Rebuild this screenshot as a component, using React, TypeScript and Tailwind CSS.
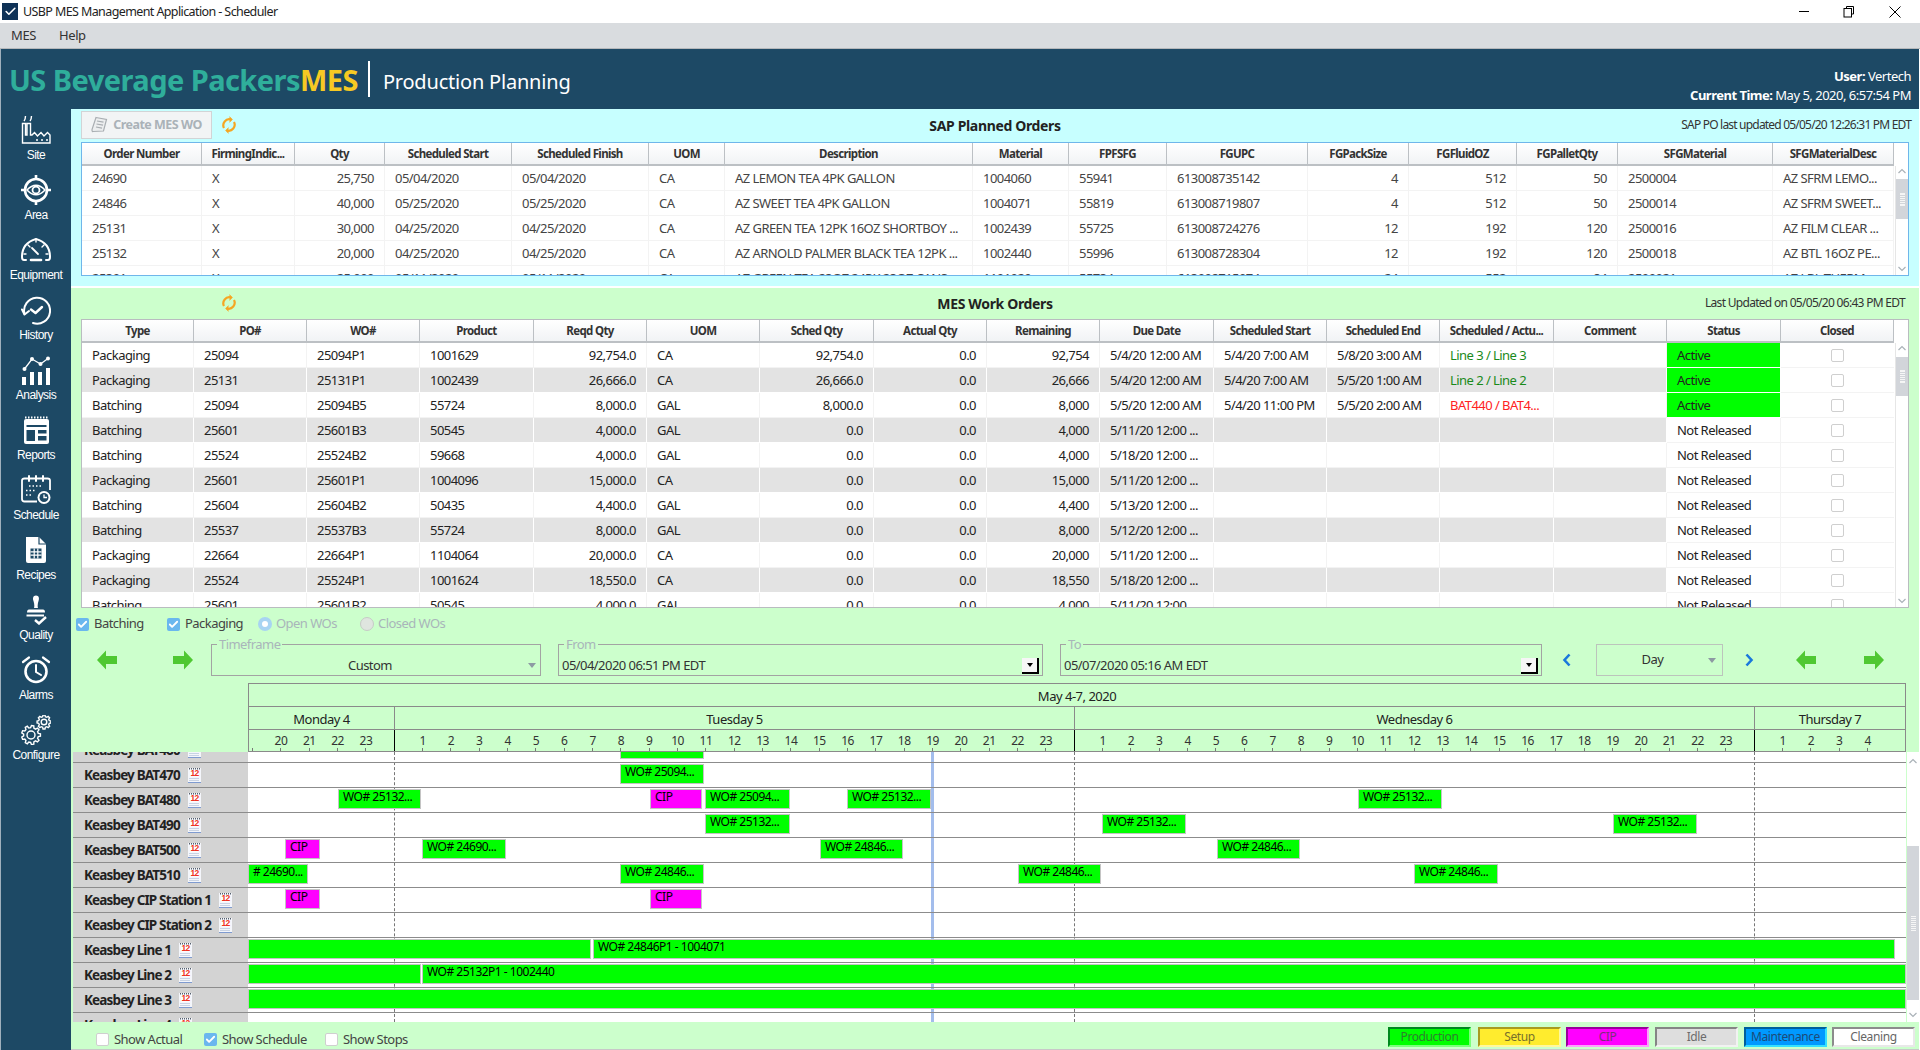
import { Check } from "lucide-react";

const sapCols = "grid-cols-[120px_93px_90px_127px_137px_76px_248px_96px_98px_141px_101px_108px_101px_155px_121px]";
const mesCols = "grid-cols-[112px_113px_113px_114px_113px_113px_114px_113px_113px_114px_113px_113px_114px_113px_114px_113px]";

const sapHead = ["Order Number", "FirmingIndic...", "Qty", "Scheduled Start", "Scheduled Finish", "UOM", "Description", "Material", "FPFSFG", "FGUPC", "FGPackSize", "FGFluidOZ", "FGPalletQty", "SFGMaterial", "SFGMaterialDesc"];
const sapRight = [2, 10, 11, 12];
const sapRows = [
  ["24690", "X", "25,750", "05/04/2020", "05/04/2020", "CA", "AZ LEMON TEA 4PK GALLON", "1004060", "55941", "613008735142", "4", "512", "50", "2500004", "AZ SFRM LEMO..."],
  ["24846", "X", "40,000", "05/25/2020", "05/25/2020", "CA", "AZ SWEET TEA 4PK GALLON", "1004071", "55819", "613008719807", "4", "512", "50", "2500014", "AZ SFRM SWEET..."],
  ["25131", "X", "30,000", "04/25/2020", "04/25/2020", "CA", "AZ GREEN TEA 12PK 16OZ SHORTBOY ...", "1002439", "55725", "613008724276", "12", "192", "120", "2500016", "AZ FILM CLEAR ..."],
  ["25132", "X", "20,000", "04/25/2020", "04/25/2020", "CA", "AZ ARNOLD PALMER BLACK TEA 12PK ...", "1002440", "55996", "613008728304", "12", "192", "120", "2500018", "AZ BTL 16OZ PE..."],
  ["25301", "X", "25,000", "05/11/2020", "05/11/2020", "CA", "AZ GREEN TEA 23OZ 24PK 23OZ CANS", "1101029", "55734", "613008715074", "24", "552", "84", "2500021", "AZ LBL THERM..."],
];

const mesHead = ["Type", "PO#", "WO#", "Product", "Reqd Qty", "UOM", "Sched Qty", "Actual Qty", "Remaining", "Due Date", "Scheduled Start", "Scheduled End", "Scheduled / Actu...", "Comment", "Status", "Closed"];
const mesRight = [4, 6, 7, 8];
const mesRows = [
  ["Packaging", "25094", "25094P1", "1001629", "92,754.0", "CA", "92,754.0", "0.0", "92,754", "5/4/20 12:00 AM", "5/4/20 7:00 AM", "5/8/20 3:00 AM", "Line 3 / Line 3", "", "Active"],
  ["Packaging", "25131", "25131P1", "1002439", "26,666.0", "CA", "26,666.0", "0.0", "26,666", "5/4/20 12:00 AM", "5/4/20 7:00 AM", "5/5/20 1:00 AM", "Line 2 / Line 2", "", "Active"],
  ["Batching", "25094", "25094B5", "55724", "8,000.0", "GAL", "8,000.0", "0.0", "8,000", "5/5/20 12:00 AM", "5/4/20 11:00 PM", "5/5/20 2:00 AM", "BAT440 / BAT4...", "", "Active"],
  ["Batching", "25601", "25601B3", "50545", "4,000.0", "GAL", "0.0", "0.0", "4,000", "5/11/20 12:00 ...", "", "", "", "", "Not Released"],
  ["Batching", "25524", "25524B2", "59668", "4,000.0", "GAL", "0.0", "0.0", "4,000", "5/18/20 12:00 ...", "", "", "", "", "Not Released"],
  ["Packaging", "25601", "25601P1", "1004096", "15,000.0", "CA", "0.0", "0.0", "15,000", "5/11/20 12:00 ...", "", "", "", "", "Not Released"],
  ["Batching", "25604", "25604B2", "50435", "4,400.0", "GAL", "0.0", "0.0", "4,400", "5/13/20 12:00 ...", "", "", "", "", "Not Released"],
  ["Batching", "25537", "25537B3", "55724", "8,000.0", "GAL", "0.0", "0.0", "8,000", "5/12/20 12:00 ...", "", "", "", "", "Not Released"],
  ["Packaging", "22664", "22664P1", "1104064", "20,000.0", "CA", "0.0", "0.0", "20,000", "5/11/20 12:00 ...", "", "", "", "", "Not Released"],
  ["Packaging", "25524", "25524P1", "1001624", "18,550.0", "CA", "0.0", "0.0", "18,550", "5/18/20 12:00 ...", "", "", "", "", "Not Released"],
  ["Batching", "25601", "25601B2", "50545", "4,000.0", "GAL", "0.0", "0.0", "4,000", "5/11/20 12:00 ...", "", "", "", "", "Not Released"],
];

type Bar = { x1: number; x2: number; label?: string; cip?: boolean };
const ganttRows: { name: string; bars: Bar[] }[] = [
  { name: "Keasbey BAT460", bars: [{ x1: 620, x2: 704 }] },
  { name: "Keasbey BAT470", bars: [{ x1: 620, x2: 704, label: "WO# 25094..." }] },
  { name: "Keasbey BAT480", bars: [{ x1: 338, x2: 421, label: "WO# 25132..." }, { x1: 650, x2: 702, label: "CIP", cip: true }, { x1: 705, x2: 790, label: "WO# 25094..." }, { x1: 847, x2: 931, label: "WO# 25132..." }, { x1: 1358, x2: 1442, label: "WO# 25132..." }] },
  { name: "Keasbey BAT490", bars: [{ x1: 705, x2: 790, label: "WO# 25132..." }, { x1: 1102, x2: 1186, label: "WO# 25132..." }, { x1: 1613, x2: 1697, label: "WO# 25132..." }] },
  { name: "Keasbey BAT500", bars: [{ x1: 285, x2: 320, label: "CIP", cip: true }, { x1: 422, x2: 506, label: "WO# 24690..." }, { x1: 820, x2: 903, label: "WO# 24846..." }, { x1: 1217, x2: 1300, label: "WO# 24846..." }] },
  { name: "Keasbey BAT510", bars: [{ x1: 248, x2: 308, label: "# 24690..." }, { x1: 620, x2: 704, label: "WO# 24846..." }, { x1: 1018, x2: 1101, label: "WO# 24846..." }, { x1: 1414, x2: 1498, label: "WO# 24846..." }] },
  { name: "Keasbey CIP Station 1", bars: [{ x1: 285, x2: 320, label: "CIP", cip: true }, { x1: 650, x2: 702, label: "CIP", cip: true }] },
  { name: "Keasbey CIP Station 2", bars: [] },
  { name: "Keasbey Line 1", bars: [{ x1: 248, x2: 591 }, { x1: 593, x2: 1895, label: "WO# 24846P1 - 1004071" }] },
  { name: "Keasbey Line 2", bars: [{ x1: 248, x2: 421 }, { x1: 422, x2: 1906, label: "WO# 25132P1 - 1002440" }] },
  { name: "Keasbey Line 3", bars: [{ x1: 248, x2: 1906 }] },
  { name: "Keasbey Line 4", bars: [] },
];

const hours: { x: number; label: string }[] = [{ x: 252, label: "" }];
[20, 21, 22, 23].forEach((h) => hours.push({ x: 394.3 + (h - 24) * 28.33, label: String(h) }));
[0, 1].forEach((d) => {
  for (let h = 1; h < 24; h++) hours.push({ x: 394.3 + 680 * d + h * 28.33, label: String(h) });
});
[1, 2, 3, 4].forEach((h) => hours.push({ x: 1754.3 + h * 28.33, label: String(h) }));

const legend = [
  { label: "Production", cls: "bg-[#00ff00] border-t-[#00891e] border-l-[#00891e] border-r-[#7cff7c] border-b-[#7cff7c] text-[#2f7f2f]", ml: "" },
  { label: "Setup", cls: "bg-[#ffec2e] border-t-[#a89a20] border-l-[#a89a20] border-r-[#fff8a0] border-b-[#fff8a0] text-[#77702c]", ml: "ml-[7px]" },
  { label: "CIP", cls: "bg-[#ff00ff] border-t-[#990099] border-l-[#990099] border-r-[#ff9cff] border-b-[#ff9cff] text-[#7a2f7a]", ml: "ml-[5px]" },
  { label: "Idle", cls: "bg-[#dedede] border-t-[#858585] border-l-[#858585] border-r-[#f2f2f2] border-b-[#f2f2f2] text-[#6c6c6c]", ml: "ml-[6px]" },
  { label: "Maintenance", cls: "bg-[#0099ff] border-t-[#005f9c] border-l-[#005f9c] border-r-[#33e0ff] border-b-[#33e0ff] text-[#1d4a78]", ml: "ml-[6px]" },
  { label: "Cleaning", cls: "bg-white border-t-[#8c8c8c] border-l-[#8c8c8c] border-r-[#e8e8e8] border-b-[#e8e8e8] text-[#666666]", ml: "ml-[5px]" },
];

function gearPath(cx: number, cy: number, r: number, teeth: number) {
  const pts: string[] = [];
  const step = (Math.PI * 2) / teeth;
  for (let i = 0; i < teeth; i++) {
    const a = i * step;
    [
      [r * 0.78, a - step * 0.32],
      [r, a - step * 0.18],
      [r, a + step * 0.18],
      [r * 0.78, a + step * 0.32],
    ].forEach(([rad, t]) => pts.push(`${(cx + rad * Math.cos(t)).toFixed(2)} ${(cy + rad * Math.sin(t)).toFixed(2)}`));
  }
  return "M" + pts.join("L") + "Z";
}

const navIcons: Record<string, React.ReactNode> = {
  Site: (
    <g fill="none" stroke="white" strokeWidth="1.4">
      <path d="M1.5 28V8.5H4.5V20H6V8.5H9.5V20H11L13.5 17.5L16.5 21L20 17.5L23 21L26.5 17.5L29 20V28Z" />
      <path d="M3 6Q4.5 4 4.5 1M9 6Q10.5 4 10.5 1" />
      <path d="M15 25H17M20 25H22M25 25H27" strokeWidth="1.6" />
    </g>
  ),
  Area: (
    <g fill="none" stroke="white">
      <circle cx="15" cy="15" r="11" strokeWidth="2.6" />
      <path d="M15 0V5M15 25V30M0 15H5M25 15H30" strokeWidth="2.6" />
      <path d="M6 15Q15 5.500 24 15Q15 24.500 6 15Z" strokeWidth="1.6" />
      <circle cx="15" cy="15" r="3.500" strokeWidth="1.800" />
    </g>
  ),
  Equipment: (
    <g fill="none" stroke="white" strokeWidth="2" strokeLinecap="round">
      <path d="M5 25H3Q1 25 1 22Q1 8 15 4Q29 8 29 22Q29 25 27 25H25" />
      <path d="M15 4V7M7 10L9 12M23 10L21 12M3 19H5M27 19H25" strokeWidth="1.400" />
      <path d="M11 13L17 19" strokeWidth="1.800" />
      <path d="M10 25H20" strokeWidth="2.600" />
    </g>
  ),
  History: (
    <g fill="none" stroke="white" strokeWidth="2" strokeLinecap="round" strokeLinejoin="round">
      <path d="M3.500 19A13 13 0 1 1 12 28" />
      <path d="M1 14.500L3.500 19.500L8 16" />
      <path d="M10 14.500L14.500 18L21 12" strokeWidth="2.400" />
    </g>
  ),
  Analysis: (
    <g fill="white">
      <path d="M3.500 14L11 4L19.500 9L27 3.500" fill="none" stroke="white" strokeWidth="1.300" />
      <circle cx="3.500" cy="14" r="2" />
      <circle cx="11" cy="4" r="2" />
      <circle cx="19.500" cy="9" r="2" />
      <circle cx="27" cy="3.500" r="2" />
      <rect x="1" y="22" width="4" height="8" />
      <rect x="9" y="17" width="4" height="13" />
      <rect x="17" y="17" width="4" height="13" />
      <rect x="25" y="13" width="4" height="17" />
    </g>
  ),
  Reports: (
    <g>
      <rect x="3" y="4" width="25" height="25" rx="2" fill="white" />
      <path d="M4 2.500H27" stroke="white" strokeWidth="2" strokeDasharray="1.500 1.500" />
      <path d="M5.500 10H25.500V12H5.500ZM5.500 15H14V26H5.500ZM17 15H25.500V18.500H17ZM17 21H25.500V25.500H17Z" fill="#1d4965" />
    </g>
  ),
  Schedule: (
    <g>
      <path d="M16 26.500H3.500Q1 26.500 1 24V5.500Q1 3.500 3.500 3.500H26.500Q29 3.500 29 5.500V15" fill="none" stroke="white" strokeWidth="1.800" />
      <path d="M8 1V6M15 1V6M22 1V6" stroke="white" strokeWidth="2" strokeLinecap="round" />
      <path d="M8 11H21M5 15.500H15M5 20H11" stroke="white" strokeWidth="1.500" strokeDasharray="1.500 2" />
      <circle cx="23" cy="22.500" r="6.500" fill="white" />
      <circle cx="23" cy="22.500" r="4.500" fill="#1d4965" />
      <path d="M23 19.500V22.500H26" fill="none" stroke="white" strokeWidth="1.300" />
    </g>
  ),
  Recipes: (
    <g>
      <path d="M5 2H18L25 9V26Q25 28 23 28H7Q5 28 5 26Z" fill="white" />
      <path d="M18 2V9H25" fill="none" stroke="#1d4965" strokeWidth="1.200" />
      <path d="M9.500 13.500H20.500V23.500H9.500Z" fill="#1d4965" />
      <path d="M13.200 13.500V23.500M16.800 13.500V23.500M9.500 16.800H20.500M9.500 20.200H20.500" stroke="white" strokeWidth="1.200" />
    </g>
  ),
  Quality: (
    <g>
      <path d="M15 0.500C12 0.500 11.500 3.500 12.500 6C13.500 9 13.500 12 13 13H17C16.500 12 16.500 9 17.500 6C18.500 3.500 18 0.500 15 0.500Z" fill="white" />
      <path d="M8 14.500H22Q24 14.500 24 17.500H6Q6 14.500 8 14.500Z" fill="white" />
      <path d="M5.500 20.500H23" stroke="white" strokeWidth="2" />
      <path d="M14 25L18 28.500L25 22" fill="none" stroke="white" strokeWidth="2.400" />
    </g>
  ),
  Alarms: (
    <g fill="none" stroke="white" strokeLinecap="round">
      <circle cx="15" cy="16.500" r="10.500" strokeWidth="2.600" />
      <path d="M15 10V17L20 20" strokeWidth="2" />
      <path d="M2 7L8 2.500M28 7L22 2.500" strokeWidth="2.200" />
    </g>
  ),
  Configure: (
    <g fill="none" stroke="white" strokeWidth="1.400">
      <path d={gearPath(10, 20, 9.500, 9)} />
      <circle cx="10" cy="20" r="4" />
      <path d={gearPath(23, 7, 7, 8)} />
      <circle cx="23" cy="7" r="2.800" />
    </g>
  ),
};

const navItems = ["Site", "Area", "Equipment", "History", "Analysis", "Reports", "Schedule", "Recipes", "Quality", "Alarms", "Configure"];

function RefreshIcon() {
  return (
    <svg width="14" height="18" viewBox="0 0 14 18" fill="none" stroke="#f5a623" strokeWidth="2.200">
      <path d="M2 12A6 6 0 0 1 9 3.500" />
      <path d="M12 6A6 6 0 0 1 5 14.500" />
      <path d="M7.500 0.500L10.500 3.500L7.500 6.500" fill="#f5a623" strokeWidth="0.500" />
      <path d="M6.500 11.500L3.500 14.500L6.500 17.500" fill="#f5a623" strokeWidth="0.500" />
    </svg>
  );
}

function BlueCheck() {
  return (
    <span className="flex h-[13px] w-[13px] shrink-0 items-center justify-center rounded-[2px] bg-[#6ab7ee]">
      <Check size={11} color="white" strokeWidth={4} />
    </span>
  );
}

function EmptyBox() {
  return <span className="h-[13px] w-[13px] shrink-0 rounded-[2px] border border-[#cfcfcf] bg-white" />;
}

function GreenArrow({ right }: { right?: boolean }) {
  return (
    <svg width="20" height="20" viewBox="0 0 20 20" className={right ? "shrink-0" : "shrink-0 -scale-x-100"}>
      <path d="M0 6H11V0.500L20 10L11 19.500V14H0Z" fill="#4fc832" />
    </svg>
  );
}

function BlueChevron({ right }: { right?: boolean }) {
  return (
    <svg width="10" height="14" viewBox="0 0 10 14" className="shrink-0">
      <path d={right ? "M2.500 1.500L7.500 7L2.500 12.500" : "M7.500 1.500L2.500 7L7.500 12.500"} fill="none" stroke="#1a78dc" strokeWidth="2.600" />
    </svg>
  );
}

function Caret() {
  return <span className="h-0 w-0 border-x-[4px] border-t-[5px] border-x-transparent border-t-[#8d9aa3]" />;
}

function DateButton() {
  return (
    <span className="ml-auto mr-[3px] flex h-[16px] w-[17px] items-center justify-center border-b-2 border-r-2 border-black bg-[#f6f6f6]">
      <span className="h-0 w-0 border-x-[3px] border-t-[4px] border-x-transparent border-t-black" />
    </span>
  );
}

function ScrollStrip({ thumbTop, thumbHeight }: { thumbTop: string; thumbHeight: string }) {
  return (
    <div className="relative h-full w-[13px] shrink-0 border-l border-[#e6e6e6] bg-white">
      <svg width="10" height="6" viewBox="0 0 10 6" className="absolute left-[1px] top-[2px]">
        <path d="M1.500 5L5 1.500L8.500 5" fill="none" stroke="#aab2b8" strokeWidth="1.200" />
      </svg>
      <div className={`absolute left-0 right-0 flex items-center justify-center bg-[#d2d5da] ${thumbTop} ${thumbHeight}`}>
        <span className="h-[13px] w-[5px] border-y border-[#f4f4f4] bg-[repeating-linear-gradient(to_bottom,#f6f6f6_0,#f6f6f6_1px,#d2d5da_1px,#d2d5da_2px)]" />
      </div>
      <svg width="10" height="6" viewBox="0 0 10 6" className="absolute bottom-[3px] left-[1px]">
        <path d="M1.500 1L5 4.500L8.500 1" fill="none" stroke="#aab2b8" strokeWidth="1.200" />
      </svg>
    </div>
  );
}

function HeaderRow({ cols, labels }: { cols: string; labels: string[] }) {
  return (
    <div className={`grid h-[23px] shrink-0 ${cols} border-b-2 border-[#bcc0c4] bg-gradient-to-b from-white to-[#f1f3f5]`}>
      {labels.map((h, i) => (
        <div key={i} className="flex items-center justify-center border-r border-[#bcc0c4] text-[11.5px] font-bold tracking-[-0.65px] text-[#333333]">
          {h}
        </div>
      ))}
    </div>
  );
}

function SapTable() {
  return (
    <div className="ml-[10px] flex h-[134px] w-[1828px] border border-[#6fb6ea] bg-white">
      <div className="w-[1812px] shrink-0 overflow-hidden">
        <HeaderRow cols={sapCols} labels={sapHead} />
        {sapRows.map((r, i) => (
          <div key={i} className={`grid h-[25px] ${sapCols} border-b border-[#f3f3f3]`}>
            {r.map((c, j) => (
              <div key={j} className={`flex items-center truncate border-r border-[#f3f3f3] px-[10px] pt-[1px] text-[13px] tracking-[-0.55px] text-[#444444] ${sapRight.includes(j) ? "justify-end" : ""}`}>
                {c}
              </div>
            ))}
          </div>
        ))}
      </div>
      <div className="flex h-full w-[14px] flex-col">
        <div className="h-[23px] shrink-0" />
        <div className="min-h-0 flex-1 pl-[1px]">
          <ScrollStrip thumbTop="top-[13px]" thumbHeight="h-[40px]" />
        </div>
      </div>
    </div>
  );
}

function MesTable() {
  return (
    <div className="ml-[10px] flex h-[289px] w-[1828px] border border-[#b9bcc0] bg-white">
      <div className="w-[1812px] shrink-0 overflow-hidden">
        <HeaderRow cols={mesCols} labels={mesHead} />
        {mesRows.map((r, i) => {
          const gray = i % 2 === 1;
          return (
            <div key={i} className={`grid h-[25px] ${mesCols}`}>
              {r.map((c, j) => {
                let cls = gray ? "bg-[#e3e3e3] border-white" : "bg-white border-[#f3f3f3]";
                let color = "text-[#222222]";
                if (j === 14) cls = c === "Active" ? "bg-[#00ff00] border-white" : "bg-white border-[#f3f3f3]";
                if (j === 12) color = c.startsWith("BAT") ? "text-[#ff2222]" : "text-[#1a8a1a]";
                return (
                  <div key={j} className={`flex items-center truncate border-b border-r px-[10px] pt-[1px] text-[13px] tracking-[-0.55px] ${cls} ${color} ${mesRight.includes(j) ? "justify-end" : ""}`}>
                    {c}
                  </div>
                );
              })}
              <div className="flex items-center justify-center border-b border-[#f3f3f3] bg-white">
                <EmptyBox />
              </div>
            </div>
          );
        })}
      </div>
      <div className="flex h-full w-[14px] flex-col">
        <div className="h-[23px] shrink-0" />
        <div className="min-h-0 flex-1 pl-[1px]">
          <ScrollStrip thumbTop="top-[14px]" thumbHeight="h-[39px]" />
        </div>
      </div>
    </div>
  );
}

function CalendarIcon() {
  return (
    <svg width="13" height="15" viewBox="0 0 13 15" className="shrink-0">
      <rect x="0" y="0" width="13" height="15" fill="#f4f6fb" />
      <path d="M1 0.700H12" stroke="#55606e" strokeWidth="1.400" strokeDasharray="1 1" />
      <rect x="2" y="2" width="9" height="6.500" fill="white" />
      <text x="6.500" y="8" textAnchor="middle" fontSize="8.500" fontWeight="700" fill="#ee3322" fontFamily="'Liberation Sans', sans-serif">12</text>
      <path d="M1.500 10.500H11.500M1.500 12.500H11.500" stroke="#9db0cc" strokeWidth="1" strokeDasharray="1 1" />
      <path d="M0 14.500H13" stroke="#7f9bd0" />
    </svg>
  );
}

function Gantt() {
  return (
    <div className="mt-[7px] flex h-[339px] flex-col">
      <div className="ml-[177px] h-[69px] w-[1658px] shrink-0 border-l border-r border-t border-[#8a8a8a]">
        <div className="flex h-[23px] items-center justify-center border-b border-[#8a8a8a] pt-[3px] text-[13px] tracking-[-0.5px] text-[#222222]">May 4-7, 2020</div>
        <div className="flex h-[23px] border-b border-[#8a8a8a] text-[13px] tracking-[-0.5px] text-[#222222]">
          <div className="flex w-[146px] items-center justify-center border-r border-[#8a8a8a] pt-[3px]">Monday 4</div>
          <div className="flex w-[680px] items-center justify-center border-r border-[#8a8a8a] pt-[3px]">Tuesday 5</div>
          <div className="flex w-[680px] items-center justify-center border-r border-[#8a8a8a] pt-[3px]">Wednesday 6</div>
          <div className="flex flex-1 items-center justify-center pt-[3px]">Thursday 7</div>
        </div>
        <div className="relative h-[22px] border-b border-[#8a8a8a]">
          {hours.map((h, i) => (
            <div key={i} className="absolute bottom-0 flex w-[20px] -translate-x-1/2 flex-col items-center" style={{ left: h.x - 249 }}>
              <span className="text-[12px] leading-[14px] tracking-[-0.5px] text-[#333333]">{h.label}</span>
              <span className="h-[3px] w-px bg-[#777777]" />
            </div>
          ))}
          {[394, 1074, 1754].map((x) => (
            <span key={x} className="absolute bottom-0 top-0 w-px bg-black" style={{ left: x - 249 }} />
          ))}
        </div>
      </div>
      <div className="flex h-[270px] pl-[2px]">
        <div className="w-[175px] shrink-0 overflow-hidden bg-[#d3d3d3]">
          <div className="-mt-[14px]">
            {ganttRows.map((r) => (
              <div key={r.name} className="flex h-[25px] items-center gap-[8px] border-b border-[#8c8c8c] pl-[11px] text-[13.5px] font-bold leading-[16px] tracking-[-0.85px] text-[#222222]">
                {r.name}
                <CalendarIcon />
              </div>
            ))}
          </div>
        </div>
        <div className="relative w-[1658px] shrink-0 overflow-hidden bg-white">
          <span className="absolute bottom-0 top-0 left-[683px] w-[3px] bg-[#a3bdec]" />
          {[146, 826, 1506].map((x) => (
            <span key={x} className="absolute bottom-0 top-0 border-l border-dashed border-[#777777]" style={{ left: x }} />
          ))}
          <div className="relative -mt-[14px]">
            {ganttRows.map((r) => (
              <div key={r.name} className="relative h-[25px] border-b border-[#8c8c8c]">
                {r.bars.map((b) => (
                  <div
                    key={b.x1}
                    className={`absolute top-[1px] h-[20px] truncate border border-[#c4c4c4] pl-[4px] text-[12px] leading-[13px] tracking-[-0.5px] text-black ${b.cip ? "bg-[#ff00ff]" : "bg-[#00ff00]"}`}
                    style={{ left: b.x1 - 248, width: b.x2 - b.x1 }}
                  >
                    {b.label}
                  </div>
                ))}
              </div>
            ))}
          </div>
        </div>
        <div className="ml-[1px] h-full">
          <div className="relative h-full w-[12px] bg-white">
            <svg width="10" height="6" viewBox="0 0 10 6" className="absolute left-[1px] top-[6px]">
              <path d="M1.500 5L5 1.500L8.500 5" fill="none" stroke="#aab2b8" strokeWidth="1.200" />
            </svg>
            <div className="absolute left-0 right-0 top-[94px] flex h-[154px] items-center justify-center bg-[#d2d5da]">
              <span className="h-[15px] w-[5px] bg-[repeating-linear-gradient(to_bottom,#f6f6f6_0,#f6f6f6_1px,#d2d5da_1px,#d2d5da_2px)]" />
            </div>
            <svg width="10" height="6" viewBox="0 0 10 6" className="absolute bottom-[4px] left-[1px]">
              <path d="M1.500 1L5 4.500L8.500 1" fill="none" stroke="#aab2b8" strokeWidth="1.200" />
            </svg>
          </div>
        </div>
      </div>
    </div>
  );
}

export default function App() {
  return (
    <div className="flex h-[1050px] w-[1920px] flex-col overflow-hidden bg-white font-['Noto_Sans',sans-serif]">
      <div className="flex h-[23px] shrink-0 items-center bg-white pl-[2px] text-[12.5px] tracking-[-0.6px] text-[#222222]">
        <span className="mr-[5px] flex h-[17px] w-[16px] items-center justify-center bg-[#0f3257]">
          <Check size={13} color="white" strokeWidth={3} />
        </span>
        <span className="pt-[1px]">USBP MES Management Application - Scheduler</span>
        <div className="ml-auto flex items-center">
          <span className="mr-[34px] h-px w-[10px] bg-black" />
          <svg width="12" height="12" viewBox="0 0 12 12" className="mr-[34px]" fill="none" stroke="black">
            <path d="M3.500 2.500V0.500H10.500V8H8.500" />
            <rect x="1" y="2.500" width="7.500" height="8.500" />
          </svg>
          <svg width="12" height="12" viewBox="0 0 12 12" className="mr-[19px]" stroke="black">
            <path d="M0.500 0.500L11.500 11.500M11.500 0.500L0.500 11.500" />
          </svg>
        </div>
      </div>
      <div className="flex h-[26px] shrink-0 items-center gap-[23px] border-b border-[#b5b8bb] bg-[#d9dcdf] pl-[11px] text-[13px] tracking-[-0.4px] text-[#333333]">
        <span>MES</span>
        <span>Help</span>
      </div>
      <div className="flex min-h-0 w-[1919px] flex-1 flex-col border-l border-[#9fb0bd]">
        <div className="flex h-[60px] shrink-0 items-center bg-[#1d4965] pl-[8px]">
          <span className="pt-[2px] text-[29px] font-bold tracking-[-0.55px] text-[#2fae9b]">US Beverage Packers</span>
          <span className="pt-[2px] text-[29px] font-bold tracking-[-0.55px] text-[#f7c923]">MES</span>
          <span className="ml-[10px] h-[36px] w-[2px] bg-white" />
          <span className="ml-[13px] mt-[6px] text-[20px] tracking-[-0.2px] text-white">Production Planning</span>
          <div className="ml-auto mt-[14px] flex flex-col items-end pr-[8px] text-[13px] leading-[19px] tracking-[-0.5px] text-white">
            <span><b>User:</b> Vertech</span>
            <span><b>Current Time:</b> May 5, 2020, 6:57:54 PM</span>
          </div>
        </div>
        <div className="flex min-h-0 flex-1">
          <nav className="flex w-[70px] shrink-0 flex-col bg-[#1d4965]">
            {navItems.map((n) => (
              <div key={n} className="flex h-[60px] flex-col items-center pt-[6px]">
                <svg width="30" height="30" viewBox="0 0 30 30">{navIcons[n]}</svg>
                <span className="mt-[2px] font-['Liberation_Sans',sans-serif] text-[12px] leading-[16px] tracking-[-0.55px] text-white">{n}</span>
              </div>
            ))}
          </nav>
          <main className="flex min-w-0 flex-1 flex-col bg-white">
            <section className="h-[177px] shrink-0 bg-[#c7ffff]">
              <div className="grid h-[33px] grid-cols-[1fr_auto_1fr] items-center pb-[1px]">
                <div className="flex items-center">
                  <button className="ml-[10px] flex h-[28px] w-[131px] items-center justify-center gap-[5px] border border-[#d2d4d6] bg-[#f2f4f5] text-[12.5px] font-bold tracking-[-0.5px] text-[#aab2b8]">
                    <svg width="17" height="18" viewBox="0 0 17 18" fill="none" stroke="#a9aeb2" strokeWidth="1.200">
                      <path d="M5 1.500L15.500 3.500L12.500 15L2 15.500Q1 16 1 13.500Z" fill="#eceeef" />
                      <path d="M6 5L12.500 6.200M5.500 8L12 9.200M5 11L11 12.200" />
                    </svg>
                    Create MES WO
                  </button>
                  <span className="ml-[10px] flex"><RefreshIcon /></span>
                </div>
                <span className="text-[14px] font-bold tracking-[-0.35px] text-[#222222]">SAP Planned Orders</span>
                <span className="pr-[8px] text-right text-[12px] tracking-[-0.8px] text-[#333333]">SAP PO last updated 05/05/20 12:26:31 PM EDT</span>
              </div>
              <SapTable />
            </section>
            <div className="h-[2px] shrink-0 bg-white" />
            <section className="flex min-h-0 flex-1 flex-col border-b border-[#c8c8c8] bg-[#ccffcc]">
              <div className="grid h-[31px] shrink-0 grid-cols-[1fr_auto_1fr] items-center pb-[1px]">
                <span className="ml-[151px] flex"><RefreshIcon /></span>
                <span className="text-[14px] font-bold tracking-[-0.35px] text-[#222222]">MES Work Orders</span>
                <span className="pr-[14px] text-right text-[12px] tracking-[-0.7px] text-[#333333]">Last Updated on 05/05/20 06:43 PM EDT</span>
              </div>
              <MesTable />
              <div className="flex h-[28px] shrink-0 items-center pl-[5px] pt-[4px] text-[13px] tracking-[-0.55px] text-[#444444]">
                <BlueCheck />
                <span className="ml-[5px] w-[73px]">Batching</span>
                <BlueCheck />
                <span className="ml-[5px] w-[73px]">Packaging</span>
                <span className="flex h-[14px] w-[14px] items-center justify-center rounded-full bg-[#a8d4f2]"><span className="h-[6px] w-[6px] rounded-full bg-white" /></span>
                <span className="ml-[4px] w-[84px] text-[#a9b5ba]">Open WOs</span>
                <span className="h-[14px] w-[14px] rounded-full border border-[#c6ccc6] bg-[#dfe5df]" />
                <span className="ml-[4px] text-[#a9b5ba]">Closed WOs</span>
              </div>
              <div className="flex h-[40px] shrink-0 text-[13px] tracking-[-0.55px] text-[#333333]">
                <span className="ml-[26px] mt-[14px] flex"><GreenArrow /></span>
                <span className="ml-[56px] mt-[14px] flex"><GreenArrow right /></span>
                <fieldset className="ml-[18px] h-full w-[330px] border border-[#a3a3a3]">
                  <legend className="ml-[5px] px-[2px] text-[13px] leading-[16px] text-[#a9b5ba]">Timeframe</legend>
                  <div className="flex h-[24px] items-center pr-[4px] pt-[3px]">
                    <span className="flex-1 text-center">Custom</span>
                    <Caret />
                  </div>
                </fieldset>
                <fieldset className="ml-[17px] h-full w-[485px] border border-[#a3a3a3]">
                  <legend className="ml-[5px] px-[2px] text-[13px] leading-[16px] text-[#a9b5ba]">From</legend>
                  <div className="flex h-[24px] items-center pl-[3px] pt-[3px]">
                    <span>05/04/2020 06:51 PM EDT</span>
                    <DateButton />
                  </div>
                </fieldset>
                <fieldset className="ml-[17px] h-full w-[482px] border border-[#a3a3a3]">
                  <legend className="ml-[5px] px-[2px] text-[13px] leading-[16px] text-[#a9b5ba]">To</legend>
                  <div className="flex h-[24px] items-center pl-[3px] pt-[3px]">
                    <span>05/07/2020 05:16 AM EDT</span>
                    <DateButton />
                  </div>
                </fieldset>
                <span className="ml-[20px] mt-[17px] flex"><BlueChevron /></span>
                <div className="ml-[24px] mt-[8px] flex h-[32px] w-[127px] items-center border border-[#bcc4bc] pr-[6px]">
                  <span className="flex-1 text-center">Day</span>
                  <Caret />
                </div>
                <span className="ml-[21px] mt-[17px] flex"><BlueChevron right /></span>
                <span className="ml-[42px] mt-[14px] flex"><GreenArrow /></span>
                <span className="ml-[48px] mt-[14px] flex"><GreenArrow right /></span>
              </div>
              <Gantt />
              <div className="flex min-h-0 flex-1 items-start text-[13px] tracking-[-0.55px] text-[#444444]">
                <span className="ml-[25px] mt-[8px] flex w-[108px] items-center gap-[5px]"><EmptyBox />Show Actual</span>
                <span className="mt-[8px] flex w-[121px] items-center gap-[5px]"><BlueCheck />Show Schedule</span>
                <span className="mt-[8px] flex items-center gap-[5px]"><EmptyBox />Show Stops</span>
                <div className="ml-auto mr-[4px] mt-[5px] flex text-[12px] tracking-[-0.4px]">
                  {legend.map((l) => (
                    <div key={l.label} className={`flex h-[20px] w-[83px] items-center justify-center border-2 ${l.cls} ${l.ml}`}>{l.label}</div>
                  ))}
                </div>
              </div>
            </section>
          </main>
        </div>
      </div>
    </div>
  );
}
